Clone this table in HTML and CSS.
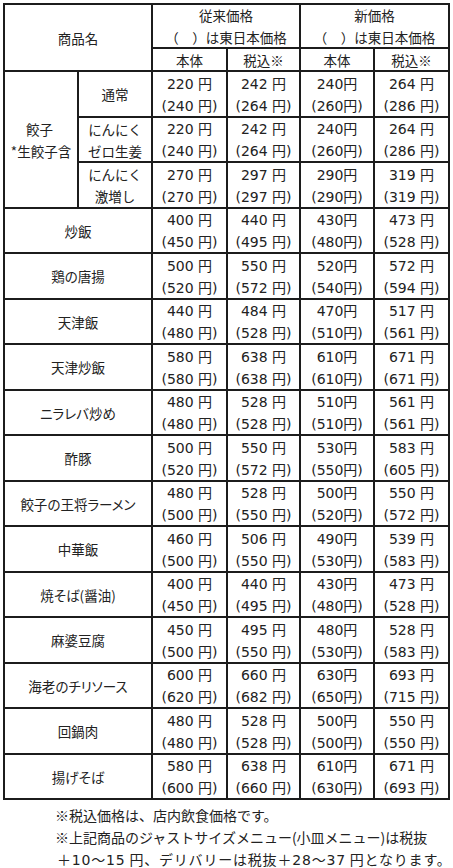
FILE: index.html
```html
<!DOCTYPE html>
<html lang="ja">
<head>
<meta charset="utf-8">
<title>価格表</title>
<link rel="stylesheet" href="styles.css">
</head>
<body>
<div class="page">
  <div class="tbl">
    <div class="c hd name">商品名</div>
    <div class="c hd grp">従来価格<br>（　）は東日本価格</div>
    <div class="c hd grp">新価格<br>（　）は東日本価格</div>
    <div class="c hd">本体</div>
    <div class="c hd">税込※</div>
    <div class="c hd">本体</div>
    <div class="c hd">税込※</div>

    <div class="c gyoza">餃子&nbsp;<br>*生餃子含</div>
    <div class="c sub">通常</div>
    <div class="c p">220 円<br>(240 円)</div><div class="c p">242 円<br>(264 円)</div><div class="c p">240円<br>(260円)</div><div class="c p">264 円<br>(286 円)</div>
    <div class="c sub">にんにく<br>ゼロ生姜</div>
    <div class="c p">220 円<br>(240 円)</div><div class="c p">242 円<br>(264 円)</div><div class="c p">240円<br>(260円)</div><div class="c p">264 円<br>(286 円)</div>
    <div class="c sub">にんにく<br>激増し</div>
    <div class="c p">270 円<br>(270 円)</div><div class="c p">297 円<br>(297 円)</div><div class="c p">290円<br>(290円)</div><div class="c p">319 円<br>(319 円)</div>

    <div class="c item">炒飯</div>
    <div class="c p">400 円<br>(450 円)</div><div class="c p">440 円<br>(495 円)</div><div class="c p">430円<br>(480円)</div><div class="c p">473 円<br>(528 円)</div>
    <div class="c item">鶏の唐揚</div>
    <div class="c p">500 円<br>(520 円)</div><div class="c p">550 円<br>(572 円)</div><div class="c p">520円<br>(540円)</div><div class="c p">572 円<br>(594 円)</div>
    <div class="c item">天津飯</div>
    <div class="c p">440 円<br>(480 円)</div><div class="c p">484 円<br>(528 円)</div><div class="c p">470円<br>(510円)</div><div class="c p">517 円<br>(561 円)</div>
    <div class="c item">天津炒飯</div>
    <div class="c p">580 円<br>(580 円)</div><div class="c p">638 円<br>(638 円)</div><div class="c p">610円<br>(610円)</div><div class="c p">671 円<br>(671 円)</div>
    <div class="c item">ニラレバ炒め</div>
    <div class="c p">480 円<br>(480 円)</div><div class="c p">528 円<br>(528 円)</div><div class="c p">510円<br>(510円)</div><div class="c p">561 円<br>(561 円)</div>
    <div class="c item">酢豚</div>
    <div class="c p">500 円<br>(520 円)</div><div class="c p">550 円<br>(572 円)</div><div class="c p">530円<br>(550円)</div><div class="c p">583 円<br>(605 円)</div>
    <div class="c item">餃子の王将ラーメン</div>
    <div class="c p">480 円<br>(500 円)</div><div class="c p">528 円<br>(550 円)</div><div class="c p">500円<br>(520円)</div><div class="c p">550 円<br>(572 円)</div>
    <div class="c item">中華飯</div>
    <div class="c p">460 円<br>(500 円)</div><div class="c p">506 円<br>(550 円)</div><div class="c p">490円<br>(530円)</div><div class="c p">539 円<br>(583 円)</div>
    <div class="c item">焼そば(醤油)</div>
    <div class="c p">400 円<br>(450 円)</div><div class="c p">440 円<br>(495 円)</div><div class="c p">430円<br>(480円)</div><div class="c p">473 円<br>(528 円)</div>
    <div class="c item">麻婆豆腐</div>
    <div class="c p">450 円<br>(500 円)</div><div class="c p">495 円<br>(550 円)</div><div class="c p">480円<br>(530円)</div><div class="c p">528 円<br>(583 円)</div>
    <div class="c item">海老のチリソース</div>
    <div class="c p">600 円<br>(620 円)</div><div class="c p">660 円<br>(682 円)</div><div class="c p">630円<br>(650円)</div><div class="c p">693 円<br>(715 円)</div>
    <div class="c item">回鍋肉</div>
    <div class="c p">480 円<br>(480 円)</div><div class="c p">528 円<br>(528 円)</div><div class="c p">500円<br>(500円)</div><div class="c p">550 円<br>(550 円)</div>
    <div class="c item">揚げそば</div>
    <div class="c p">580 円<br>(600 円)</div><div class="c p">638 円<br>(660 円)</div><div class="c p">610円<br>(630円)</div><div class="c p">671 円<br>(693 円)</div>
  </div>
  <div class="notes">
    <p>※税込価格は、店内飲食価格です。</p>
    <p>※上記商品のジャストサイズメニュー(小皿メニュー)は税抜</p>
    <p class="wide">＋<span class="num">10</span>～<span class="num">15</span> 円、デリバリーは税抜＋<span class="num">28</span>～<span class="num">37</span> 円となります。</p>
  </div>
</div>
</body>
</html>
```

FILE: styles.css
```css
* { box-sizing: border-box; }
html, body { margin: 0; padding: 0; background: #fff; }
body {
  font-family: "Noto Sans CJK JP", "Noto Sans", sans-serif;
  color: #222;
  font-size: 13.5px;
}
.page { padding: 3px 0 0 3px; }
.tbl {
  display: grid;
  grid-template-columns: 74px 74px 75px 73px 74px 75px;
  grid-template-rows: 44px 23px;
  grid-auto-rows: 45.5px;
  width: max-content;
  border-left: 2px solid #1c1c1c;
  border-top: 2px solid #1c1c1c;
}
.c {
  border-right: 2px solid #1c1c1c;
  border-bottom: 2px solid #1c1c1c;
  display: flex;
  flex-direction: column;
  align-items: center;
  justify-content: center;
  text-align: center;
  line-height: 22px;
  white-space: nowrap;
}
.name { grid-column: span 2; grid-row: span 2; }
.grp { grid-column: span 2; }
.gyoza { grid-row: span 3; }
.item { grid-column: span 2; }
.item, .gyoza { font-feature-settings: "palt"; }
.p {
  font-family: "DejaVu Sans", "Noto Sans CJK JP", sans-serif;
  font-size: 14px;
  padding-top: 2px;
}
.sub, .item, .gyoza { padding-top: 1px; }
.notes {
  margin-top: 4px;
  padding-left: 52px;
  font-size: 14px;
  line-height: 22px;
  white-space: nowrap;
}
.notes p { margin: 0; }
.notes .wide { letter-spacing: 0.8px; padding-left: 2px; }
.num { font-family: "DejaVu Sans", sans-serif; }
```
